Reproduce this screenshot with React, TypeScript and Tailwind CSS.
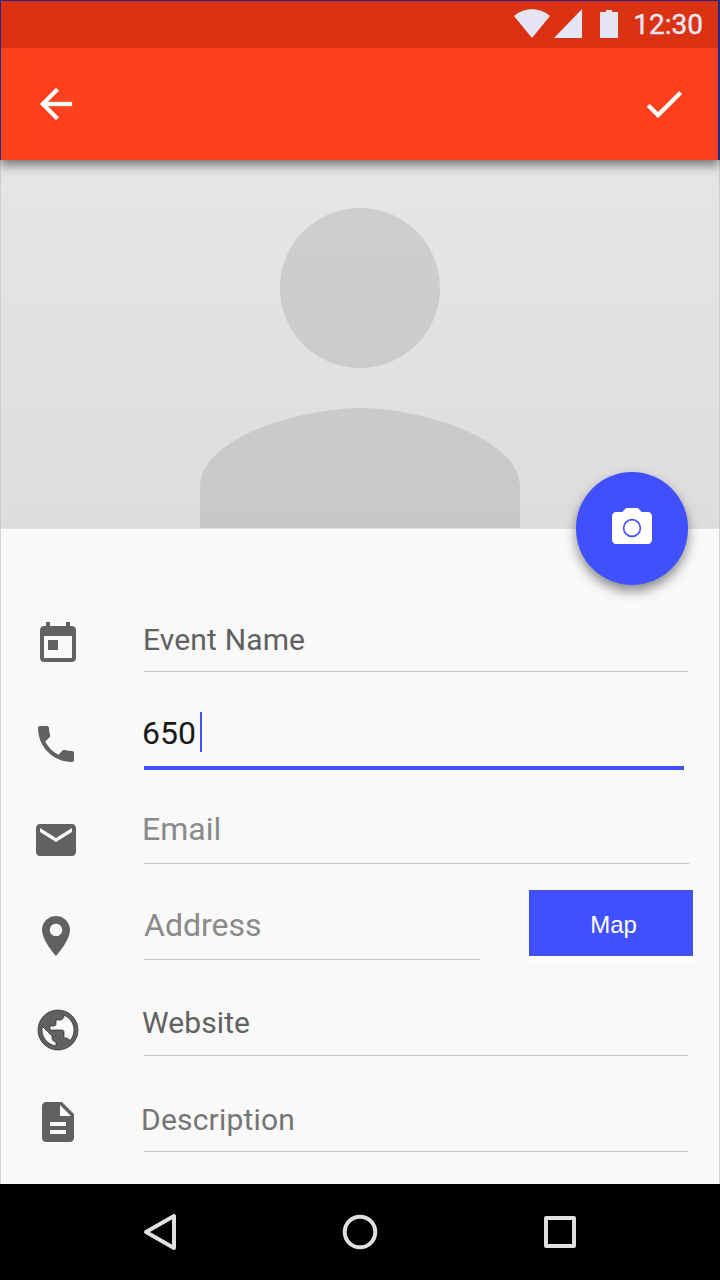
import React from "react";

type IconProps = { d: string; className?: string };

function Icon({ d, className = "" }: IconProps) {
  return (
    <svg viewBox="0 0 24 24" className={`size-12 shrink-0 fill-current ${className}`}>
      <path d={d} />
    </svg>
  );
}

const paths = {
  back: "M20 11H7.83l5.59-5.59L12 4l-8 8 8 8 1.41-1.41L7.83 13H20v-2z",
  check: "M9 16.17L4.83 12l-1.42 1.41L9 19 21 7l-1.41-1.41z",
  today:
    "M19 3h-1V1h-2v2H8V1H6v2H5c-1.11 0-1.99.9-1.99 2L3 19c0 1.1.89 2 2 2h14c1.1 0 2-.9 2-2V5c0-1.1-.9-2-2-2zm0 16H5V8h14v11zM7 10h5v5H7z",
  phone:
    "M6.62 10.79c1.44 2.83 3.76 5.14 6.59 6.59l2.2-2.2c.27-.27.67-.36 1.02-.24 1.12.37 2.33.57 3.57.57.55 0 1 .45 1 1V20c0 .55-.45 1-1 1-9.39 0-17-7.61-17-17 0-.55.45-1 1-1h3.5c.55 0 1 .45 1 1 0 1.25.2 2.45.57 3.57.11.35.03.74-.25 1.02l-2.2 2.2z",
  mail: "M20 4H4c-1.1 0-1.99.9-1.99 2L2 18c0 1.1.9 2 2 2h16c1.1 0 2-.9 2-2V6c0-1.1-.9-2-2-2zm0 4l-8 5-8-5V6l8 5 8-5v2z",
  place:
    "M12 2C8.13 2 5 5.13 5 9c0 5.25 7 13 7 13s7-7.75 7-13c0-3.87-3.13-7-7-7zm0 10.1c-1.7 0-3.1-1.4-3.1-3.1s1.4-3.1 3.1-3.1 3.1 1.4 3.1 3.1-1.4 3.1-3.1 3.1z",
  globe:
    "M12 2C6.48 2 2 6.48 2 12s4.48 10 10 10 10-4.48 10-10S17.52 2 12 2zm-1 17.93c-3.95-.49-7-3.85-7-7.93 0-.62.08-1.21.21-1.79L9 15v1c0 1.1.9 2 2 2v1.93zm6.9-2.54c-.26-.81-1-1.39-1.9-1.39h-1v-3c0-.55-.45-1-1-1H8v-2h2c.55 0 1-.45 1-1V7h2c1.1 0 2-.9 2-2v-.41c2.93 1.19 5 4.06 5 7.41 0 2.08-.8 3.97-2.1 5.39z",
  doc: "M14 2H6c-1.1 0-1.99.9-1.99 2L4 20c0 1.1.89 2 1.99 2H18c1.1 0 2-.9 2-2V8l-6-6zm2 16H8v-2h8v2zm0-4H8v-2h8v2zm-3-5V3.5L18.5 9H13z",
};

function Row({
  icon,
  iconClass,
  lineClass,
  rowClass = "h-24",
  children,
  after,
}: {
  icon: string;
  iconClass: string;
  lineClass: string;
  rowClass?: string;
  children: React.ReactNode;
  after?: React.ReactNode;
}) {
  return (
    <div className={`flex shrink-0 items-start ${rowClass}`}>
      <div className="w-[143px] shrink-0 text-[#616161]">
        <Icon d={icon} className={iconClass} />
      </div>
      <div className={`h-full shrink-0 whitespace-nowrap ${lineClass}`}>{children}</div>
      {after}
    </div>
  );
}

export default function App() {
  return (
    <div className="flex h-[1280px] w-[720px] flex-col overflow-hidden bg-[#f9f9f9] font-[Roboto,sans-serif]">
      <header className="relative z-10 h-40 shrink-0 border-t border-r-2 border-l border-[#22297f] bg-[#fd401d] shadow-[0_5px_10px_0_rgba(0,0,0,0.5)]">
        <div className="flex h-[47px] items-center justify-end bg-[#dc3214] pr-[15px] text-[#e6e5f3]">
          <svg viewBox="0 0 104 29" className="mr-[15px] -mt-0.5 h-[29px] w-[104px] fill-current">
            <path d="M0 7C10 -2 26 -2 36 7L18 29z" />
            <path d="M40 29L68 0V29z" />
            <path d="M86 3h6V1h6v2h6v26H86z" />
          </svg>
          <span className="text-[28px] leading-none [-webkit-text-stroke:0.4px_#e6e5f3]">12:30</span>
        </div>
        <div className="flex h-28 items-center justify-between pl-[31px] pr-[30px] text-white">
          <Icon d={paths.back} className="stroke-white [stroke-width:0.15]" />
          <Icon d={paths.check} className="stroke-white [stroke-width:0.15]" />
        </div>
      </header>

      <section className="relative flex h-[368px] shrink-0 items-end justify-center border-x border-[#cecece] bg-linear-to-b from-[#e6e6e6] to-[#dddddd]">
        <svg viewBox="4 4 16 16" className="size-80">
          <defs>
            <linearGradient id="person" x1="0" y1="4" x2="0" y2="20" gradientUnits="userSpaceOnUse">
              <stop offset="0" stopColor="#cecece" />
              <stop offset="1" stopColor="#c8c8c8" />
            </linearGradient>
          </defs>
          <path
            fill="url(#person)"
            d="M12 12c2.21 0 4-1.79 4-4s-1.79-4-4-4-4 1.79-4 4 1.79 4 4 4zm0 2c-2.67 0-8 1.34-8 4v2h16v-2c0-2.66-5.33-4-8-4z"
          />
        </svg>
        <button className="absolute -bottom-[57px] right-[31px] z-10 flex h-[113px] w-28 items-center justify-center rounded-full bg-[#4050ff] pb-px shadow-[0_6px_12px_0_rgba(0,0,0,0.45)]">
          <svg viewBox="0 0 24 24" className="size-12">
            <path
              fill="#fff"
              d="M9 2L7.17 4H4c-1.1 0-2 .9-2 2v12c0 1.1.9 2 2 2h16c1.1 0 2-.9 2-2V6c0-1.1-.9-2-2-2h-3.17L15 2H9z"
            />
            <circle cx="12" cy="12" r="4.2" fill="none" stroke="#4050ff" strokeWidth="0.8" />
          </svg>
        </button>
      </section>

      <main className="flex h-[656px] shrink-0 flex-col border-x border-t border-x-[#d2d2d2] border-t-[#e2e2e2] pt-[47px]">
        <Row
          icon={paths.today}
          iconClass="ml-[33px] mt-11"
          lineClass="w-[544px] border-b border-[#c5c5c5]"
        >
          <div className="-ml-px pt-[46px] text-[30px] leading-9 tracking-[0.15px] text-[#616161]">Event Name</div>
        </Row>
        <Row
          icon={paths.phone}
          iconClass="ml-[31px] mt-12"
          rowClass="h-[98px]"
          lineClass="w-[540px] border-b-4 border-[#4050ff]"
        >
          <div className="-ml-0.5 flex items-start gap-1 pt-10 leading-10 text-[#181818]">
            <span className="pt-px text-[32px]">650</span>
            <span className="h-10 w-0.5 bg-[#4050ff]" />
          </div>
        </Row>
        <Row
          icon={paths.mail}
          iconClass="ml-[31px] mt-12"
          rowClass="-mt-0.5 h-24"
          lineClass="w-[545px] border-b border-[#c5c5c5]"
        >
          <div className="-ml-0.5 pt-[41px] text-[32px] leading-10 text-[#8a8a8a]">Email</div>
        </Row>
        <Row
          icon={paths.place}
          iconClass="ml-[31px] mt-12"
          lineClass="w-[336px] border-b border-[#c5c5c5]"
          after={
            <button className="ml-[49px] mt-[26px] h-[66px] w-[164px] border border-l-0 border-[#4355d0] bg-[#4050ff] pl-1.5 pt-1 font-['Liberation_Sans',sans-serif] text-2xl text-white shadow-[1px_4px_0_1px_#fff]">
              Map
            </button>
          }
        >
          <div className="pt-[41px] text-[32px] leading-10 text-[#8a8a8a]">Address</div>
        </Row>
        <Row
          icon={paths.globe}
          iconClass="ml-[33px] mt-[46px] stroke-[#2a2a2a] [stroke-width:0.35]"
          lineClass="w-[544px] border-b border-[#c5c5c5]"
        >
          <div className="-ml-0.5 pt-[45px] text-[30px] leading-9 tracking-[0.1px] text-[#616161]">Website</div>
        </Row>
        <Row icon={paths.doc} iconClass="ml-[33px] mt-[42px]" lineClass="w-[544px] border-b border-[#c5c5c5]">
          <div className="-ml-[3px] pt-[46px] text-[30px] leading-9 tracking-[0.2px] text-[#757575]">Description</div>
        </Row>
      </main>

      <nav className="flex h-24 shrink-0 items-center justify-between bg-black px-[136px] text-[#dfdfdf]">
        <svg viewBox="0 0 48 48" className="size-12 fill-none stroke-current stroke-4" strokeLinejoin="round">
          <path d="M38 8V40L10 24z" />
        </svg>
        <svg viewBox="0 0 48 48" className="size-12 fill-none stroke-current stroke-4">
          <circle cx="24" cy="24" r="15.3" />
        </svg>
        <svg viewBox="0 0 48 48" className="size-12 fill-none stroke-current stroke-4" strokeLinejoin="round">
          <rect x="10" y="10" width="28" height="28" />
        </svg>
      </nav>
    </div>
  );
}
